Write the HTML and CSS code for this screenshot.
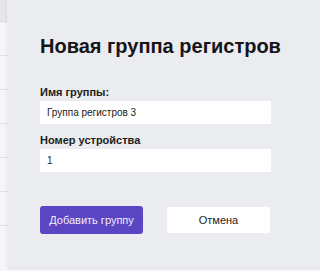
FILE: index.html
```html
<!DOCTYPE html>
<html lang="ru">
<head>
<meta charset="utf-8">
<link rel="stylesheet" href="styles.css">
</head>
<body>
<div class="page">
  <div class="side">
    <div class="side-top"></div>
    <div class="side-row"></div>
    <div class="side-row"></div>
    <div class="side-row"></div>
    <div class="side-row"></div>
    <div class="side-row"></div>
    <div class="side-row"></div>
  </div>
  <div class="dialog">
    <h1 class="title">Новая группа регистров</h1>
    <div class="field">
      <label class="label">Имя группы:</label>
      <div class="input">Группа регистров 3</div>
    </div>
    <div class="field">
      <label class="label">Номер устройства</label>
      <div class="input">1</div>
    </div>
    <div class="actions">
      <button class="btn btn-primary">Добавить группу</button>
      <button class="btn btn-secondary">Отмена</button>
    </div>
  </div>
</div>
</body>
</html>
```
FILE: styles.css
```css
html, body {
  margin: 0;
  padding: 0;
  height: 271px;
  overflow: hidden;
  background: #f6f6f8;
  font-family: "Liberation Sans", Arial, sans-serif;
}
.page {
  display: flex;
  height: 267px;
}
.side {
  width: 7px;
  flex: none;
  display: flex;
  flex-direction: column;
}
.side-top {
  height: 21px;
  background: #e6e6e9;
  border-bottom: 1px solid #dcdce0;
}
.side-row {
  height: 33px;
  border-bottom: 1px solid #e0e0e4;
}
.dialog {
  flex: 1;
  background: #ebecf0;
  padding: 34px 0 0 33px;
  box-shadow: 0 2px 3px rgba(0,0,0,0.08);
}
.title {
  margin: 0 0 28px;
  font-size: 20px;
  line-height: 24px;
  font-weight: bold;
  color: #151518;
  white-space: nowrap;
}
.field {
  width: 231px;
  margin-bottom: 10px;
}
.label {
  display: block;
  font-size: 11px;
  line-height: 13px;
  font-weight: bold;
  color: #1c1c20;
  margin-bottom: 2px;
}
.input {
  background: #fff;
  height: 23px;
  line-height: 23px;
  font-size: 10px;
  padding-left: 7px;
  color: #222;
}
.actions {
  width: 230px;
  display: flex;
  justify-content: space-between;
  margin-top: 34px;
}
.btn {
  font-family: "Liberation Sans", Arial, sans-serif;
  font-size: 11px;
  height: 28px;
  width: 103px;
  border: none;
  border-radius: 3px;
  padding: 0;
}
.btn-primary {
  background: #5a46c2;
  color: #f0eefb;
}
.btn-secondary {
  background: #fff;
  color: #222;
  height: 26px;
  margin-top: 1px;
  border-radius: 1px;
}
```
